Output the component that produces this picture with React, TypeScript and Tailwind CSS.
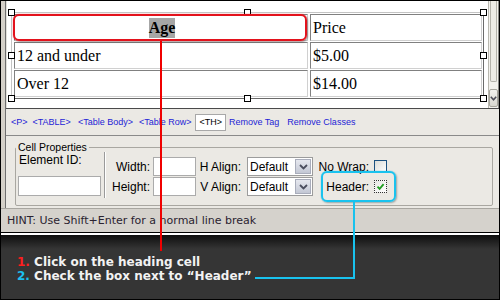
import React from "react";

function Cell({ children, className = "" }: { children?: React.ReactNode; className?: string }) {
  return (
    <div
      className={
        "h-[27px] flex items-center border border-t-[#808080] border-l-[#808080] border-b-[#d0d0d0] border-r-[#d0d0d0] pl-[2px] font-['Liberation_Serif','Times_New_Roman',serif] text-[16px] text-black " +
        className
      }
    >
      {children}
    </div>
  );
}

function Select() {
  return (
    <div className="h-[19px] w-[66px] bg-white border border-[#9c9c9c] flex items-center justify-between pl-[2px] pr-[1px]">
      <span className="text-[12px] leading-none text-black">Default</span>
      <div className="w-[16px] h-[15px] bg-[linear-gradient(to_bottom,#e6e8ef,#c3c7d4)] border border-[#a9adbb] flex items-center justify-center">
        <svg width="9" height="6" viewBox="0 0 9 6">
          <polyline points="1,1 4.5,4.5 8,1" fill="none" stroke="#4b4e5e" strokeWidth="1.8" />
        </svg>
      </div>
    </div>
  );
}

function Input({ className = "" }: { className?: string }) {
  return <div className={"bg-white border border-[#ababab] " + className} />;
}

export default function App() {
  return (
    <div className="relative w-[500px] h-[300px] overflow-hidden border border-black bg-[#353535] flex flex-col font-['Liberation_Sans',Arial,sans-serif] text-black">
      {/* framed top area */}
      <div className="flex h-[207px] shrink-0 bg-[#d4d0c8]">
        <div className="w-[4px] shrink-0 bg-[#d4d0c8]" />
        <div className="flex-1 min-w-0 flex flex-col border-l border-[#6f6f6f]">
          {/* editor */}
          <div className="flex h-[107px] shrink-0">
            <div className="flex-1 bg-white border-l border-[#e2e0da] pt-[11px] pl-[4px]">
              <div className="w-[473px] border border-t-[#c4c4c4] border-l-[#c4c4c4] border-b-[#6a6a6a] border-r-[#6a6a6a] pl-[2px] pt-[1px] pr-[1px] pb-[1px] grid grid-cols-[294px_172px] gap-x-[2px] gap-y-[1px]">
                <Cell className="justify-center pl-0">
                  <span className="font-bold bg-[#a6a6a6] leading-[20px]">Age</span>
                </Cell>
                <Cell>Price</Cell>
                <Cell>12 and under</Cell>
                <Cell>$5.00</Cell>
                <Cell>Over 12</Cell>
                <Cell>$14.00</Cell>
              </div>
            </div>
            {/* scrollbar */}
            <div className="w-[11px] shrink-0 bg-[#f3f2ed] border-l border-[#b9b8b0] border-r border-r-[#8a8a86] flex flex-col justify-between">
              <div className="h-[81px] mx-[1px] bg-[#ecebe5] border border-[#b3b2aa] border-t-0 rounded-b-[2px]" />
              <div className="h-[18px] mx-[0px] mb-[1px] bg-[linear-gradient(to_bottom,#f2f2ee,#d9d8d0)] border border-[#a7a69e] rounded-[2px] flex items-center justify-center">
                <svg width="7" height="5" viewBox="0 0 7 5">
                  <polyline points="0.8,0.8 3.5,3.8 6.2,0.8" fill="none" stroke="#4d4d58" strokeWidth="1.6" />
                </svg>
              </div>
            </div>
          </div>
          {/* tag bar */}
          <div className="h-[28px] shrink-0 border-t border-t-[#4a4a4a] border-b border-b-[#8a8a8a] bg-[#ebe9e4] flex items-center pl-[5px] text-[9px] leading-none text-[#2424d6]">
            <span>&lt;P&gt;</span>
            <span className="ml-[5px]">&lt;TABLE&gt;</span>
            <span className="ml-[7px]">&lt;Table Body&gt;</span>
            <span className="ml-[6px]">&lt;Table Row&gt;</span>
            <span className="ml-[4px] h-[17px] px-[3px] flex items-center bg-white border border-[#a8a8a8] text-black">&lt;TH&gt;</span>
            <span className="ml-[3px]">Remove Tag</span>
            <span className="ml-[8px]">Remove Classes</span>
          </div>
          {/* properties panel */}
          <div className="flex-1 bg-[#ebe9e4] pt-[5px] pl-[9px] pr-[6px]">
            <fieldset className="border border-[#a9a7a1] pb-[7px] rounded-[2px]">
              <legend className="ml-[0px] px-[2px] text-[10.5px] leading-[12px] text-black">Cell Properties</legend>
              <div className="flex items-start">
                <div className="ml-[2px] w-[83px] flex flex-col">
                  <span className="pl-[1px] text-[12px] leading-[14px]">Element ID:</span>
                  <Input className="mt-[9px] h-[20px] w-[83px]" />
                </div>
                <div className="ml-[3px] -mt-[1px] h-[46px] w-[2px] border-l border-[#9a9a9a] border-r border-r-white" />
                <div className="mt-[4px] grid grid-cols-[47px_43px_51px_66px_61px_13px] grid-rows-[19px_19px] gap-y-[1px] items-center text-[12px] leading-none">
                  <span className="text-right pr-[3px]">Width:</span>
                  <Input className="h-[19px] w-[43px]" />
                  <span className="text-right pr-[6px]">H Align:</span>
                  <Select />
                  <span className="text-right pr-[5px]">No Wrap:</span>
                  <div className="w-[13px] h-[13px] border border-[#1c5180] bg-[linear-gradient(135deg,#dcdcd7,#ffffff)]" />
                  <span className="text-right pr-[3px]">Height:</span>
                  <Input className="h-[19px] w-[43px]" />
                  <span className="text-right pr-[6px]">V Align:</span>
                  <Select />
                  <span className="text-right pr-[5px]">Header:</span>
                  <div className="w-[13px] h-[13px] border border-dotted border-[#333] bg-[linear-gradient(135deg,#e6e6e2,#ffffff)] flex items-center justify-center">
                    <svg width="9" height="9" viewBox="0 0 9 9">
                      <path d="M1.5 4.6 L3.6 6.8 L7.6 2.2" fill="none" stroke="#1f9d1f" strokeWidth="1.8" />
                    </svg>
                  </div>
                </div>
              </div>
            </fieldset>
          </div>
        </div>
      </div>

      {/* hint bar */}
      <div className="h-[25px] shrink-0 bg-[#d5d2cc] border-t border-t-[#a8a6a0] border-b border-b-black flex items-center pl-[6px] font-['DejaVu_Sans',Verdana,sans-serif] text-[11px] leading-none text-[#2a2330]">
        HINT: Use Shift+Enter for a normal line break
      </div>
      <div className="h-[2px] shrink-0 bg-white" />

      {/* instructions */}
      <div className="flex-1 bg-[linear-gradient(to_bottom,#0e0e0e,#353535_14px)] pt-[20px] pl-[16px] font-['DejaVu_Sans',Verdana,sans-serif] font-bold text-[12px] leading-[14px] text-[#f2f2f2]">
        <div>
          <span className="text-[#ff1e1e]">1.</span> Click on the heading cell
        </div>
        <div>
          <span className="text-[#1cc0f0]">2.</span> Check the box next to {"\u201C"}Header{"\u201D"}
        </div>
      </div>

      {/* table selection handles */}
      <div className="absolute left-[7px] top-[8px] w-[7px] h-[7px] bg-white border border-black" />
      <div className="absolute left-[7px] top-[51px] w-[7px] h-[7px] bg-white border border-black" />
      <div className="absolute left-[7px] top-[94px] w-[7px] h-[7px] bg-white border border-black" />
      <div className="absolute left-[243px] top-[8px] w-[7px] h-[7px] bg-white border border-black" />
      <div className="absolute left-[243px] top-[94px] w-[7px] h-[7px] bg-white border border-black" />
      <div className="absolute left-[479px] top-[8px] w-[7px] h-[7px] bg-white border border-black" />
      <div className="absolute left-[479px] top-[51px] w-[7px] h-[7px] bg-white border border-black" />
      <div className="absolute left-[479px] top-[94px] w-[7px] h-[7px] bg-white border border-black" />

      {/* red callout */}
      <div className="absolute left-[12px] top-[13px] w-[294px] h-[27px] rounded-[6px] border-[2px] border-[#e3121c] shadow-[0_0_1px_#e3121c,1px_1px_2px_rgba(0,0,0,0.35)]" />
      <div className="absolute left-[159px] top-[40px] w-[2px] h-[210px] bg-[#f00000]" />

      {/* cyan callout */}
      <div className="absolute left-[320px] top-[170px] w-[75px] h-[31px] rounded-[6px] border-[2px] border-[#19c2ee] shadow-[0_0_1px_#19c2ee,1px_1px_2px_rgba(0,0,0,0.3)]" />
      <div className="absolute left-[352px] top-[200px] w-[2px] h-[78px] bg-[#19c2ee]" />
      <div className="absolute left-[254px] top-[276px] w-[100px] h-[2px] bg-[#19c2ee]" />
    </div>
  );
}
